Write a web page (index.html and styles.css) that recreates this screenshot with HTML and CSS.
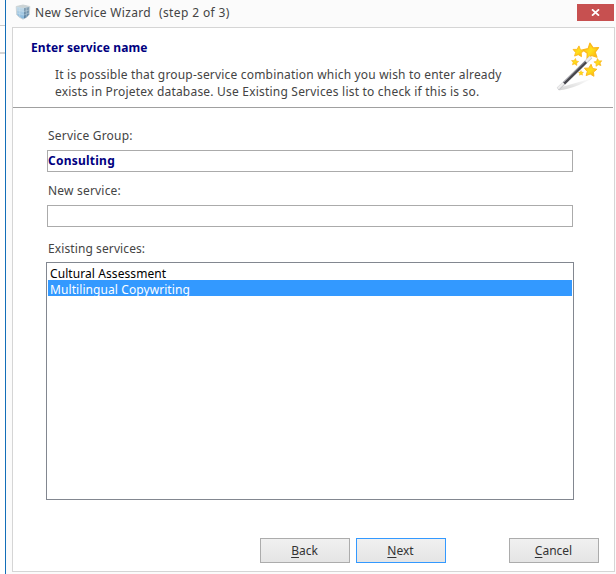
FILE: index.html
```html
<!DOCTYPE html>
<html lang="en">
<head>
<meta charset="utf-8">
<title>New Service Wizard</title>
<link rel="stylesheet" href="styles.css">
</head>
<body>
<div class="desktop">
  <div class="behind"><div class="behind-top"></div><div class="behind-row"></div></div>
  <div class="window">
    <header class="titlebar">
      <svg class="app-icon" width="16" height="16" viewBox="0 0 16 16">
        <defs><linearGradient id="ice" x1="0" y1="0" x2="0" y2="1"><stop offset="0" stop-color="#d3e3ec"/><stop offset="1" stop-color="#7fb4dc"/></linearGradient><linearGradient id="side" x1="0" y1="0" x2="0" y2="1"><stop offset="0" stop-color="#8ea6b6"/><stop offset="1" stop-color="#557d9f"/></linearGradient></defs>
        <path d="M1.200 2.500 8 1l6.800 1.500-.5 8.200Q12.500 13.500 8 15.200 3.500 13.500 1.700 10.700z" fill="url(#ice)" stroke="#cbd3d6" stroke-width=".9"/>
        <path d="M9 4 14.200 2.900 13.800 10.500Q12.500 13 9 14.600z" fill="url(#side)"/>
        <path d="M1.500 2.500 8 1l6.500 1.500L8 4z" fill="#ccd3d4"/>
        <path d="M4.700 4v9M2 6l7 1.500M2 9l7 2M11.300 4v9M9 7.500l5-1.500M9 11l5-2" fill="none" stroke="#d5e5ee" stroke-width=".4"/>
      </svg>
      <span class="title">New Service Wizard</span><span class="step">(step 2 of 3)</span>
      <div class="close"><svg width="9" height="7" viewBox="0 0 9 7"><path d="M1 .3 8 6.700M8 .3 1 6.700" stroke="#fff" stroke-width="1.700"/></svg></div>
    </header>
    <main class="panel">
      <section class="intro">
        <div class="intro-text">
          <h1>Enter service name</h1>
          <p class="line-one">It is possible that group-service combination which you wish to enter already</p>
          <p class="line-two">exists in Projetex database. Use Existing Services list to check if this is so.</p>
        </div>
        <svg class="wand" width="50" height="52" viewBox="0 0 50 52">
          <defs>
            <linearGradient id="gold" x1="0" y1="0" x2="1" y2="1"><stop offset="0" stop-color="#ffb80d"/><stop offset=".5" stop-color="#ffe01c"/><stop offset="1" stop-color="#f9a80c"/></linearGradient>
            <linearGradient id="shade" x1="0" y1="1" x2="1" y2="0"><stop offset="0" stop-color="#b8b8b8"/><stop offset="1" stop-color="#fff"/></linearGradient>
            <path id="star" d="M0-8 2.500-2.800 8-2.300 4 1.700 5 7 0 4.500-5 7-4 1.700-8-2.300-2.500-2.800z" fill="url(#gold)" stroke="#fbb71c" stroke-width="1.200" stroke-linejoin="round"/>
          </defs>
          <path d="M3 48 38 38 24 45Q9 51 3 50z" fill="url(#shade)" opacity=".6"/>
          <use href="#star" transform="translate(23.500 11.500) rotate(5) scale(.7)"/>
          <use href="#star" transform="translate(36 11) rotate(-8) scale(1)"/>
          <use href="#star" transform="translate(20 22) rotate(8) scale(.45)"/>
          <use href="#star" transform="translate(43 22.500) rotate(-8) scale(.5)"/>
          <use href="#star" transform="translate(35.500 30.500) rotate(5) scale(.78)"/>
          <use href="#star" transform="translate(26 33) scale(.32)"/>
          <path d="M3 49 36 17" stroke="#c9c9cd" stroke-width="3.600"/>
          <path d="M9 43.500 31 22" stroke="#46464c" stroke-width="3"/>
          <path d="M8.500 42.500 32 19.500" stroke="#a0a0a8" stroke-width="1"/>
          <path d="M3 48.500 8.500 43M31 21.500 35.500 17" stroke="#efefef" stroke-width="2.400"/>
        </svg>
      </section>
      <section class="form">
        <div class="label label-group">Service Group:</div>
        <div class="field"><b class="consulting">Consulting</b></div>
        <div class="label label-new">New service:</div>
        <div class="field"></div>
        <div class="label label-existing">Existing services:</div>
        <div class="list">
          <div class="item"><span>Cultural Assessment</span></div>
          <div class="item selected"><span>Multilingual Copywriting</span></div>
        </div>
      </section>
      <footer class="actions">
        <div class="button"><span><u>B</u>ack</span></div>
        <div class="button default"><span><u>N</u>ext</span></div>
        <div class="button cancel"><span><u>C</u>ancel</span></div>
      </footer>
    </main>
  </div>
</div>
</body>
</html>
```
FILE: styles.css
```css
* { box-sizing: border-box; }
body { margin: 0; width: 616px; height: 574px; overflow: hidden; background: #fff; color: #444; font: 12px/17px "Noto Sans", sans-serif; white-space: nowrap; }
svg { display: block; }
.desktop { display: flex; height: 574px; }
.behind { width: 5px; }
.behind-top { height: 26px; background: #fcfcfc; border-bottom: 1px solid #ccc; }
.behind-row { height: 28px; border-bottom: 2px solid #d4d4d4; }
.window { width: 611px; border-left: 1px solid #126eb8; background: #fbfbfb; padding-left: 6px; }
.titlebar { display: flex; height: 27px; padding-top: 4px; }
.app-icon { margin: 0 0 0 3px; }
.title, .step { height: 17px; }
.title { margin-left: 4px; width: 124px; letter-spacing: .33px; }
.step { letter-spacing: .38px; }
.close { margin-left: auto; margin-right: 2px; width: 37px; height: 17px; background: #c75050; display: flex; align-items: center; justify-content: center; }
.panel { width: 603px; height: 545px; border: 1px solid #d5d5d5; background: #fff; }
.intro { display: flex; width: 600px; height: 80px; border-bottom: 1px solid #a0a0a0; }
.intro-text { width: 542px; padding: 11px 0 0 18px; }
h1 { margin: 0 0 10px; font-size: 12px; line-height: 17px; color: #000080; letter-spacing: .1px; }
p { margin: 0 0 0 24px; line-height: 17px; }
.line-one { letter-spacing: .19px; }
.line-two { letter-spacing: .205px; }
.wand { margin-top: 12px; }
.form { padding: 19px 0 0 33px; }
.label { height: 17px; padding-left: 2px; }
.field { width: 526px; height: 22px; margin-left: 1px; border: 1px solid #ababab; line-height: 19px; color: #000080; }
.consulting { letter-spacing: .24px; }
.label-group { margin-bottom: 6px; letter-spacing: .2px; }
.label-new { margin: 10px 0 6px; letter-spacing: .2px; }
.label-existing { margin: 13px 0 5px; letter-spacing: .1px; }
.list { width: 528px; height: 238px; border: 1px solid #828790; padding: 1px; color: #000; }
.item { height: 16px; padding-left: 2px; line-height: 20px; letter-spacing: .08px; }
.selected { background: #3399ff; color: #fff; }
.actions { display: flex; padding: 38px 15px 0 247px; gap: 6px; }
.button { width: 90px; height: 25px; border: 1px solid #acacac; padding-right: 1px; background: linear-gradient(#f0f0f0, #e5e5e5); line-height: 23px; text-align: center; color: #333; }
.default { border-color: #3399ff; }
.cancel { margin-left: auto; }
u { text-underline-offset: 2px; }
```
